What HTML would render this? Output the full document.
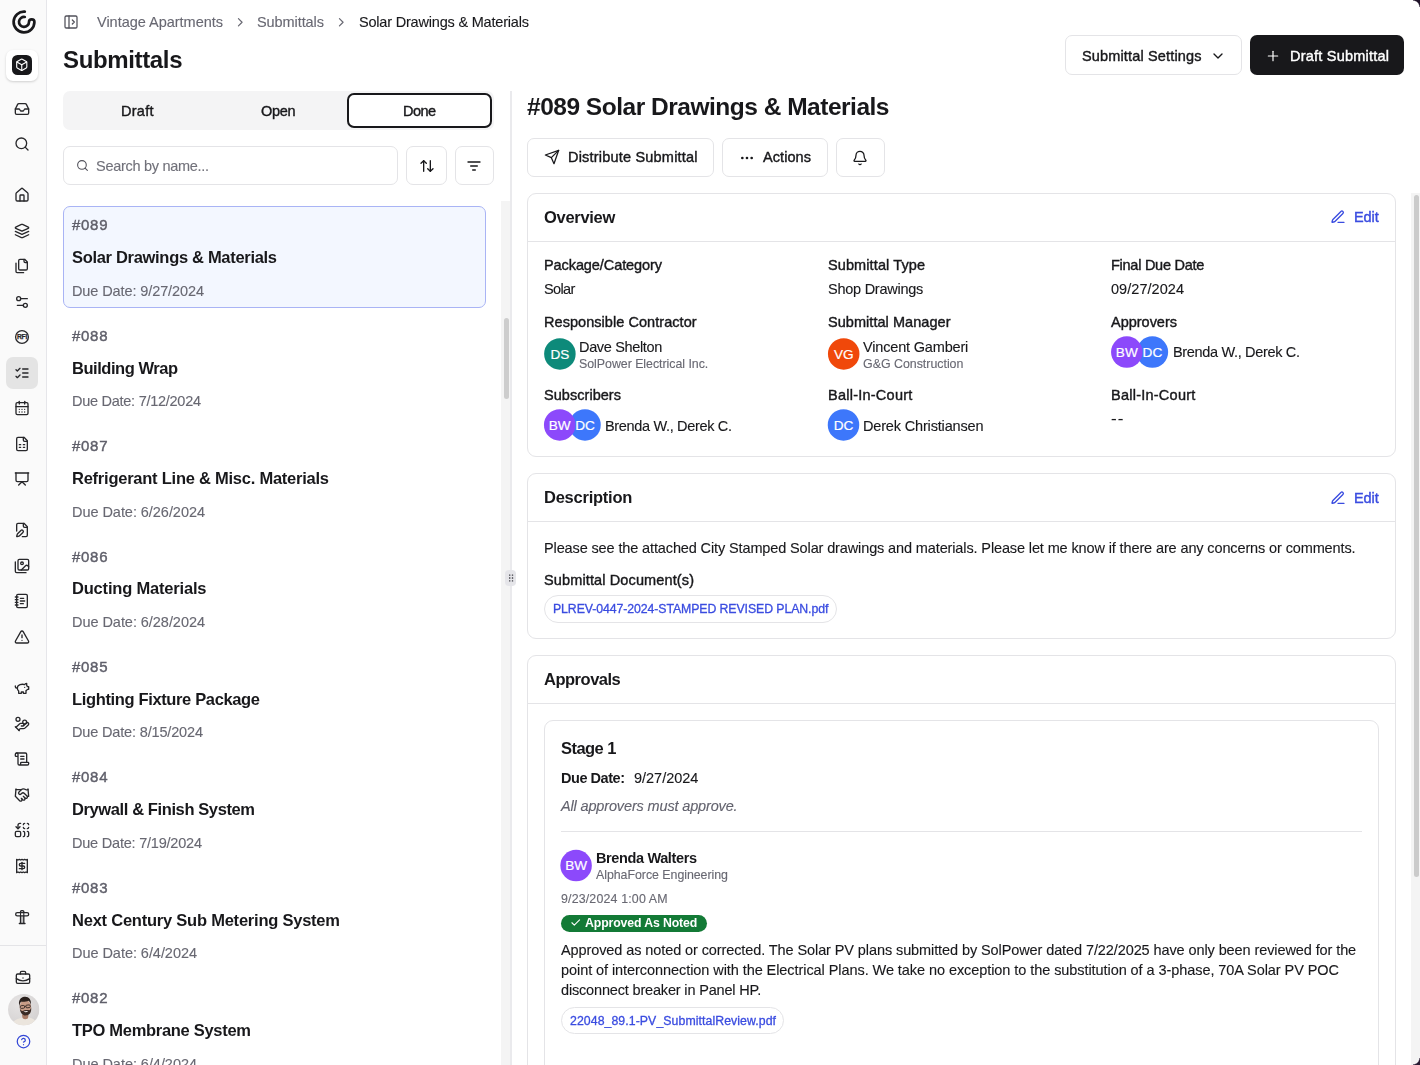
<!DOCTYPE html>
<html lang="en"><head><meta charset="utf-8"><title>Submittals - #089 Solar Drawings &amp; Materials</title>
<style>
*{box-sizing:border-box;margin:0;padding:0}
html,body{width:1420px;height:1065px;overflow:hidden;background:#fff}
body{position:relative;font-family:"Liberation Sans",sans-serif;color:#18181b;-webkit-font-smoothing:antialiased}
aside,header,section,main,article{display:contents}
.b,.t,.ic,.av{position:absolute}
.t{will-change:transform;white-space:nowrap;font-weight:400;display:block}
.ic{overflow:visible}
.av{border-radius:50%;color:#fff;text-align:center;font-family:"Liberation Sans",sans-serif}
</style></head>
<body>
<aside class="sidebar">
<div class="b" style="left:0px;top:0px;width:47px;height:1065px;background:#fafafa;border-right:1px solid #e6e6ea;"></div>
<svg class="ic" style="left:0;top:0;width:47px;height:44px" viewBox="0 0 47 44" fill="none" stroke="#18181b" stroke-width="2.7" stroke-linecap="round"><path d="M24.8 17 A5 5 0 1 0 29 22 A2.7 2.7 0 0 1 34.4 22 A10.4 10.4 0 1 1 24.8 11.6"/></svg>
<div class="b" style="left:6px;top:50px;width:32px;height:31px;background:#fff;border-radius:7px;box-shadow:0 1px 3px rgba(0,0,0,.12),0 1px 2px rgba(0,0,0,.06);"></div>
<div class="b" style="left:12px;top:55px;width:20px;height:20px;background:#18181b;border-radius:5.5px;"></div>
<svg class="ic" style="left:15.25px;top:58.25px;width:13.5px;height:13.5px;color:#fff" viewBox="0 0 24 24" fill="none" stroke="currentColor" stroke-width="2" stroke-linecap="round" stroke-linejoin="round"><path d="M21 8a2 2 0 0 0-1-1.73l-7-4a2 2 0 0 0-2 0l-7 4A2 2 0 0 0 3 8v8a2 2 0 0 0 1 1.73l7 4a2 2 0 0 0 2 0l7-4A2 2 0 0 0 21 16Z"/><path d="m3.3 7 8.7 5 8.7-5"/><path d="M12 22V12"/></svg>
<div class="b" style="left:6px;top:357px;width:32px;height:31.5px;background:#e4e4e4;border-radius:7px;"></div>
<svg class="ic" style="left:14.00px;top:100.50px;width:16px;height:16px;color:#27272a" viewBox="0 0 24 24" fill="none" stroke="currentColor" stroke-width="2" stroke-linecap="round" stroke-linejoin="round"><polyline points="22 12 16 12 14 15 10 15 8 12 2 12"/><path d="M5.45 5.11 2 12v6a2 2 0 0 0 2 2h16a2 2 0 0 0 2-2v-6l-3.45-6.89A2 2 0 0 0 16.76 4H7.24a2 2 0 0 0-1.79 1.11z"/></svg>
<svg class="ic" style="left:14.00px;top:136.00px;width:16px;height:16px;color:#27272a" viewBox="0 0 24 24" fill="none" stroke="currentColor" stroke-width="2" stroke-linecap="round" stroke-linejoin="round"><circle cx="11" cy="11" r="8"/><path d="m21 21-4.3-4.3"/></svg>
<svg class="ic" style="left:14.00px;top:187.00px;width:16px;height:16px;color:#27272a" viewBox="0 0 24 24" fill="none" stroke="currentColor" stroke-width="2" stroke-linecap="round" stroke-linejoin="round"><path d="M15 21v-8a1 1 0 0 0-1-1h-4a1 1 0 0 0-1 1v8"/><path d="M3 10a2 2 0 0 1 .709-1.528l7-5.999a2 2 0 0 1 2.582 0l7 5.999A2 2 0 0 1 21 10v9a2 2 0 0 1-2 2H5a2 2 0 0 1-2-2z"/></svg>
<svg class="ic" style="left:14.00px;top:222.50px;width:16px;height:16px;color:#27272a" viewBox="0 0 24 24" fill="none" stroke="currentColor" stroke-width="2" stroke-linecap="round" stroke-linejoin="round"><path d="m12.83 2.18a2 2 0 0 0-1.66 0L2.6 6.08a1 1 0 0 0 0 1.83l8.58 3.91a2 2 0 0 0 1.66 0l8.58-3.9a1 1 0 0 0 0-1.83Z"/><path d="m22 17.65-9.17 4.16a2 2 0 0 1-1.66 0L2 17.65"/><path d="m22 12.65-9.17 4.16a2 2 0 0 1-1.66 0L2 12.65"/></svg>
<svg class="ic" style="left:14.00px;top:258.00px;width:16px;height:16px;color:#27272a" viewBox="0 0 24 24" fill="none" stroke="currentColor" stroke-width="2" stroke-linecap="round" stroke-linejoin="round"><path d="M20 7h-3a2 2 0 0 1-2-2V2"/><path d="M9 18a2 2 0 0 1-2-2V4a2 2 0 0 1 2-2h7l4 4v10a2 2 0 0 1-2 2Z"/><path d="M3 7.6v12.8A1.6 1.6 0 0 0 4.6 22h9.8"/></svg>
<svg class="ic" style="left:14.00px;top:293.50px;width:16px;height:16px;color:#27272a" viewBox="0 0 24 24" fill="none" stroke="currentColor" stroke-width="2" stroke-linecap="round" stroke-linejoin="round"><path d="M20 7h-9"/><path d="M14 17H5"/><circle cx="17" cy="17" r="3"/><circle cx="7" cy="7" r="3"/></svg>
<svg class="ic" style="left:14.00px;top:364.80px;width:16px;height:16px;color:#27272a" viewBox="0 0 24 24" fill="none" stroke="currentColor" stroke-width="2" stroke-linecap="round" stroke-linejoin="round"><path d="m3 17 2 2 4-4"/><path d="m3 7 2 2 4-4"/><path d="M13 6h8"/><path d="M13 12h8"/><path d="M13 18h8"/></svg>
<svg class="ic" style="left:14.00px;top:400.00px;width:16px;height:16px;color:#27272a" viewBox="0 0 24 24" fill="none" stroke="currentColor" stroke-width="2" stroke-linecap="round" stroke-linejoin="round"><path d="M8 2v4"/><path d="M16 2v4"/><rect width="18" height="18" x="3" y="4" rx="2"/><path d="M3 10h18"/><path d="M8 14h.01"/><path d="M12 14h.01"/><path d="M16 14h.01"/><path d="M8 18h.01"/><path d="M12 18h.01"/><path d="M16 18h.01"/></svg>
<svg class="ic" style="left:14.00px;top:435.50px;width:16px;height:16px;color:#27272a" viewBox="0 0 24 24" fill="none" stroke="currentColor" stroke-width="2" stroke-linecap="round" stroke-linejoin="round"><path d="M15 2H6a2 2 0 0 0-2 2v16a2 2 0 0 0 2 2h12a2 2 0 0 0 2-2V7Z"/><path d="M14 2v4a2 2 0 0 0 2 2h4"/><path d="M8 13h2"/><path d="M14 13h2"/><path d="M8 17h2"/><path d="M14 17h2"/></svg>
<svg class="ic" style="left:14.00px;top:471.00px;width:16px;height:16px;color:#27272a" viewBox="0 0 24 24" fill="none" stroke="currentColor" stroke-width="2" stroke-linecap="round" stroke-linejoin="round"><path d="M2 3h20"/><path d="M21 3v11a2 2 0 0 1-2 2H5a2 2 0 0 1-2-2V3"/><path d="m7 21 5-5 5 5"/></svg>
<svg class="ic" style="left:14.00px;top:522.00px;width:16px;height:16px;color:#27272a" viewBox="0 0 24 24" fill="none" stroke="currentColor" stroke-width="2" stroke-linecap="round" stroke-linejoin="round"><path d="M12.5 22H18a2 2 0 0 0 2-2V7l-5-5H6a2 2 0 0 0-2 2v9.5"/><path d="M14 2v4a2 2 0 0 0 2 2h4"/><path d="M13.378 15.626a1 1 0 1 0-3.004-3.004l-5.01 5.012a2 2 0 0 0-.506.854l-.837 2.87a.5.5 0 0 0 .62.62l2.87-.837a2 2 0 0 0 .854-.506z"/></svg>
<svg class="ic" style="left:14.00px;top:557.50px;width:16px;height:16px;color:#27272a" viewBox="0 0 24 24" fill="none" stroke="currentColor" stroke-width="2" stroke-linecap="round" stroke-linejoin="round"><path d="M18 22H4a2 2 0 0 1-2-2V6"/><path d="m22 13-1.296-1.296a2.41 2.41 0 0 0-3.408 0L11 18"/><circle cx="12" cy="8" r="2"/><rect width="16" height="16" x="6" y="2" rx="2"/></svg>
<svg class="ic" style="left:14.00px;top:593.00px;width:16px;height:16px;color:#27272a" viewBox="0 0 24 24" fill="none" stroke="currentColor" stroke-width="2" stroke-linecap="round" stroke-linejoin="round"><path d="M2 6h4"/><path d="M2 10h4"/><path d="M2 14h4"/><path d="M2 18h4"/><rect width="16" height="20" x="4" y="2" rx="2"/><path d="M9.5 8h5"/><path d="M9.5 12H16"/><path d="M9.5 16H14"/></svg>
<svg class="ic" style="left:14.00px;top:628.50px;width:16px;height:16px;color:#27272a" viewBox="0 0 24 24" fill="none" stroke="currentColor" stroke-width="2" stroke-linecap="round" stroke-linejoin="round"><path d="m21.73 18-8-14a2 2 0 0 0-3.48 0l-8 14A2 2 0 0 0 4 21h16a2 2 0 0 0 1.73-3"/><path d="M12 9v4"/><path d="M12 17h.01"/></svg>
<svg class="ic" style="left:14.00px;top:680.00px;width:16px;height:16px;color:#27272a" viewBox="0 0 24 24" fill="none" stroke="currentColor" stroke-width="2" stroke-linecap="round" stroke-linejoin="round"><path d="M19 5c-1.5 0-2.8 1.4-3 2-3.5-1.5-11-.3-11 5 0 1.8 0 3 2 4.5V20h4v-2h3v2h4v-4c1-.5 1.7-1 2-2h2v-4h-2c0-1-.5-1.5-1-2V5z"/><path d="M2 9v1c0 1.1.9 2 2 2h1"/><path d="M16 11h.01"/></svg>
<svg class="ic" style="left:14.00px;top:715.50px;width:16px;height:16px;color:#27272a" viewBox="0 0 24 24" fill="none" stroke="currentColor" stroke-width="2" stroke-linecap="round" stroke-linejoin="round"><path d="M11 15h2a2 2 0 1 0 0-4h-3c-.6 0-1.1.2-1.4.6L3 17"/><path d="m7 21 1.6-1.4c.3-.4.8-.6 1.4-.6h4c1.1 0 2.1-.4 2.800-1.200l4.600-4.400a2 2 0 0 0-2.750-2.910l-4.200 3.900"/><path d="m2 16 6 6"/><circle cx="16" cy="9" r="2.900"/><circle cx="6" cy="5" r="3"/></svg>
<svg class="ic" style="left:14.00px;top:751.00px;width:16px;height:16px;color:#27272a" viewBox="0 0 24 24" fill="none" stroke="currentColor" stroke-width="2" stroke-linecap="round" stroke-linejoin="round"><path d="M15 12h-5"/><path d="M15 8h-5"/><path d="M19 17V5a2 2 0 0 0-2-2H4"/><path d="M8 21h12a2 2 0 0 0 2-2v-1a1 1 0 0 0-1-1H11a1 1 0 0 0-1 1v1a2 2 0 1 1-4 0V5a2 2 0 1 0-4 0v2a1 1 0 0 0 1 1h3"/></svg>
<svg class="ic" style="left:14.00px;top:786.50px;width:16px;height:16px;color:#27272a" viewBox="0 0 24 24" fill="none" stroke="currentColor" stroke-width="2" stroke-linecap="round" stroke-linejoin="round"><path d="m11 17 2 2a1 1 0 1 0 3-3"/><path d="m14 14 2.500 2.500a1 1 0 1 0 3-3l-3.880-3.880a3 3 0 0 0-4.240 0l-.880.880a1 1 0 1 1-3-3l2.810-2.810a5.790 5.790 0 0 1 7.060-.870l.470.280a2 2 0 0 0 1.420.250L21 4"/><path d="m21 3 1 11h-2"/><path d="M3 3 2 14l6.500 6.500a1 1 0 1 0 3-3"/><path d="M3 4h8"/></svg>
<svg class="ic" style="left:14.00px;top:822.00px;width:16px;height:16px;color:#27272a" viewBox="0 0 24 24" fill="none" stroke="currentColor" stroke-width="2" stroke-linecap="round" stroke-linejoin="round"><path d="M14 14a2 2 0 0 1 2 2v4a2 2 0 0 1-2 2"/><path d="M14 4a2 2 0 0 1 2-2"/><path d="M16 10a2 2 0 0 1-2-2"/><path d="M20 14a2 2 0 0 1 2 2v4a2 2 0 0 1-2 2"/><path d="M20 2a2 2 0 0 1 2 2"/><path d="M22 8a2 2 0 0 1-2 2"/><path d="m3 7 3 3 3-3"/><path d="M6 10V5a3 3 0 0 1 3-3h1"/><rect x="2" y="14" width="8" height="8" rx="2"/></svg>
<svg class="ic" style="left:14.00px;top:857.50px;width:16px;height:16px;color:#27272a" viewBox="0 0 24 24" fill="none" stroke="currentColor" stroke-width="2" stroke-linecap="round" stroke-linejoin="round"><path d="M4 2v20l2-1 2 1 2-1 2 1 2-1 2 1 2-1 2 1V2l-2 1-2-1-2 1-2-1-2 1-2-1-2 1Z"/><path d="M16 8h-6a2 2 0 1 0 0 4h4a2 2 0 1 1 0 4H8"/><path d="M12 17.5v-11"/></svg>
<svg class="ic" style="left:14.3px;top:908.5px;width:16px;height:16px;color:#27272a" viewBox="0 0 24 24" fill="none" stroke="currentColor" stroke-width="2" stroke-linecap="round" stroke-linejoin="round"><path d="M12.250 3.500v18" stroke="#c4c4c4" stroke-width="3" stroke-linecap="butt"/><path d="M9.800 21.500V4a1.500 1.500 0 0 1 1.500-1.500h1.900a1.500 1.500 0 0 1 1.500 1.500v17.500"/><rect x="2.500" y="5.500" width="19.500" height="4.800" rx="2.400" fill="#fafafa"/><path d="M9.800 6v4M14.700 6v4" stroke-width="1.600"/><path d="M8 21.800h8.500"/></svg>
<svg class="ic" style="left:14px;top:329.2px;width:16px;height:16px" viewBox="0 0 16 16" fill="none"><circle cx="8" cy="8" r="6.4" stroke="#27272a" stroke-width="1.3"/><text x="8" y="10.3" text-anchor="middle" font-family="Liberation Sans, sans-serif" font-weight="700" font-size="6.7" fill="#27272a" stroke="#27272a" stroke-width=".25" letter-spacing="-0.25">RFI</text></svg>
<div class="b" style="left:0px;top:945px;width:46px;height:1px;background:#e4e4e7;"></div>
<svg class="ic" style="left:15.20px;top:970.40px;width:16px;height:16px;color:#27272a" viewBox="0 0 24 24" fill="none" stroke="currentColor" stroke-width="2" stroke-linecap="round" stroke-linejoin="round"><path d="M12 12h.01"/><path d="M16 6V4a2 2 0 0 0-2-2h-4a2 2 0 0 0-2 2v2"/><path d="M22 13a18.15 18.15 0 0 1-20 0"/><rect width="20" height="14" x="2" y="6" rx="2"/></svg>
<svg class="ic" style="left:7.9px;top:994px;width:31.4px;height:31.4px" viewBox="0 0 31.400 31.400"><defs><clipPath id="cp"><circle cx="15.700" cy="15.700" r="15.700"/></clipPath><radialGradient id="bgg" cx="35%" cy="30%" r="80%"><stop offset="0" stop-color="#e6e4e4"/><stop offset="1" stop-color="#d3d0d0"/></radialGradient></defs><g clip-path="url(#cp)"><rect width="31.400" height="31.400" fill="url(#bgg)"/><path d="M4 31.400c.5-4 3.500-6 8-7.200l3-1.200 5.500.2c4 1 7.500 2.500 9 8.200z" fill="#ebe5dd"/><path d="M14 20.500l6.500.5-.5 3.200c-1.800 1.600-4 1.500-5.500-.2z" fill="#a87b66"/><g transform="rotate(-6 17.400 13)"><ellipse cx="17.400" cy="13.200" rx="5.700" ry="7.400" fill="#c89c86"/><path d="M11.500 11.800c-.9-5.600 1.800-9 6-9s6.700 3 5.700 8.800c-.4-2.200-1-3.600-2-4.400-1.600.6-5.500.7-7.600.1-1.200 1-1.700 2.300-2.100 4.500z" fill="#2b211d"/><path d="M11.700 13.800c0 5.200 2.400 7.600 5.700 7.600s5.700-2.400 5.700-7.600c-.6 1.700-1.300 2.500-2.300 2.900-1-.9-5.600-.9-6.700 0-1.100-.4-1.800-1.200-2.400-2.900z" fill="#3a2b25"/><path d="M15 17.300q2.400 1.900 4.800 0-2.400-.5-4.800 0z" fill="#f4f0ee"/><rect x="12.300" y="11.300" width="4.300" height="2.700" rx="1" fill="#c89c86" stroke="#241c1a" stroke-width=".8"/><rect x="18" y="11.300" width="4.300" height="2.700" rx="1" fill="#c89c86" stroke="#241c1a" stroke-width=".8"/><path d="M16.600 12.300h1.400" stroke="#241c1a" stroke-width=".7"/></g></g></svg>
<svg class="ic" style="left:16.00px;top:1033.50px;width:15px;height:15px;color:#3347d6" viewBox="0 0 24 24" fill="none" stroke="currentColor" stroke-width="2" stroke-linecap="round" stroke-linejoin="round"><circle cx="12" cy="12" r="10"/><path d="M9.09 9a3 3 0 0 1 5.83 1c0 2-3 3-3 3"/><path d="M12 17h.01"/></svg>
</aside>
<header>
<svg class="ic" style="left:63.00px;top:13.90px;width:16px;height:16px;color:#52525b" viewBox="0 0 24 24" fill="none" stroke="currentColor" stroke-width="1.9" stroke-linecap="round" stroke-linejoin="round"><rect width="18" height="18" x="3" y="3" rx="2"/><path d="M9 3v18"/><path d="m14 9 3 3-3 3"/></svg>
<span class="t" style="left:97px;top:11.50px;font-size:14.5px;line-height:20px;color:#686872;-webkit-text-stroke:0.12px #686872;letter-spacing:-0.017px;">Vintage Apartments</span>
<svg class="ic" style="left:233.05px;top:14.75px;width:14.5px;height:14.5px;color:#686872" viewBox="0 0 24 24" fill="none" stroke="currentColor" stroke-width="2" stroke-linecap="round" stroke-linejoin="round"><path d="m9 18 6-6-6-6"/></svg>
<span class="t" style="left:257px;top:11.50px;font-size:14.5px;line-height:20px;color:#686872;-webkit-text-stroke:0.12px #686872;letter-spacing:-0.078px;">Submittals</span>
<svg class="ic" style="left:333.55px;top:14.75px;width:14.5px;height:14.5px;color:#686872" viewBox="0 0 24 24" fill="none" stroke="currentColor" stroke-width="2" stroke-linecap="round" stroke-linejoin="round"><path d="m9 18 6-6-6-6"/></svg>
<span class="t" style="left:358.5px;top:11.50px;font-size:14.5px;line-height:20px;color:#18181b;-webkit-text-stroke:0.12px #18181b;letter-spacing:-0.195px;">Solar Drawings &amp; Materials</span>
<h1 class="t" style="left:63.3px;top:44.10px;font-size:24px;line-height:32px;color:#18181b;font-weight:700;letter-spacing:-0.354px;">Submittals</h1>
<div class="b btn" style="left:1065px;top:35px;width:177px;height:40px;border:1px solid #e4e4e7;border-radius:7px;background:#fff;"></div>
<span class="t" style="left:1082px;top:45.80px;font-size:14.5px;line-height:20px;color:#18181b;-webkit-text-stroke:0.4px #18181b;letter-spacing:0.154px;">Submittal Settings</span>
<svg class="ic" style="left:1209.50px;top:48.00px;width:16px;height:16px;color:#18181b" viewBox="0 0 24 24" fill="none" stroke="currentColor" stroke-width="2" stroke-linecap="round" stroke-linejoin="round"><path d="m6 9 6 6 6-6"/></svg>
<div class="b btn" style="left:1250px;top:35px;width:154px;height:40px;background:#18181b;border-radius:7px;"></div>
<svg class="ic" style="left:1264.70px;top:47.50px;width:16px;height:16px;color:#fff" viewBox="0 0 24 24" fill="none" stroke="currentColor" stroke-width="1.8" stroke-linecap="round" stroke-linejoin="round"><path d="M5 12h14"/><path d="M12 5v14"/></svg>
<span class="t" style="left:1289.5px;top:45.80px;font-size:14.5px;line-height:20px;color:#fff;-webkit-text-stroke:0.4px #fff;letter-spacing:0.221px;">Draft Submittal</span>
</header>
<section class="listpanel">
<div class="b" style="left:63px;top:91px;width:431px;height:39px;background:#f4f4f5;border-radius:7px;"></div>
<div class="b" style="left:347px;top:93px;width:145px;height:35px;background:#fff;border:2px solid #18181b;border-radius:7px;"></div>
<span class="t" style="left:120.5px;top:101.00px;font-size:14.5px;line-height:20px;color:#18181b;-webkit-text-stroke:0.4px #18181b;letter-spacing:0.270px;">Draft</span>
<span class="t" style="left:261px;top:101.00px;font-size:14.5px;line-height:20px;color:#18181b;-webkit-text-stroke:0.4px #18181b;letter-spacing:-0.328px;">Open</span>
<span class="t" style="left:403px;top:101.00px;font-size:14.5px;line-height:20px;color:#18181b;-webkit-text-stroke:0.4px #18181b;letter-spacing:-0.557px;">Done</span>
<div class="b" style="left:63px;top:146px;width:335px;height:39px;border:1px solid #e4e4e7;border-radius:7px;background:#fff;"></div>
<svg class="ic" style="left:75.70px;top:159.00px;width:13px;height:13px;color:#52525b" viewBox="0 0 24 24" fill="none" stroke="currentColor" stroke-width="2" stroke-linecap="round" stroke-linejoin="round"><circle cx="11" cy="11" r="8"/><path d="m21 21-4.3-4.3"/></svg>
<span class="t" style="left:96px;top:156.00px;font-size:14.5px;line-height:20px;color:#71717a;-webkit-text-stroke:0.12px #71717a;letter-spacing:-0.292px;">Search by name...</span>
<div class="b" style="left:406px;top:146px;width:41px;height:39px;border:1px solid #e4e4e7;border-radius:7px;background:#fff;"></div>
<svg class="ic" style="left:418.70px;top:157.50px;width:16px;height:16px;color:#18181b" viewBox="0 0 24 24" fill="none" stroke="currentColor" stroke-width="2" stroke-linecap="round" stroke-linejoin="round"><path d="m21 16-4 4-4-4"/><path d="M17 20V4"/><path d="m3 8 4-4 4 4"/><path d="M7 4v16"/></svg>
<div class="b" style="left:455px;top:146px;width:39px;height:39px;border:1px solid #e4e4e7;border-radius:7px;background:#fff;"></div>
<svg class="ic" style="left:466.40px;top:157.50px;width:16px;height:16px;color:#18181b" viewBox="0 0 24 24" fill="none" stroke="currentColor" stroke-width="2" stroke-linecap="round" stroke-linejoin="round"><path d="M3 6h18"/><path d="M7 12h10"/><path d="M10 18h4"/></svg>
<div class="b" style="left:63px;top:206px;width:423px;height:102px;background:#f3f7ff;border:1px solid #a9b4f5;border-radius:7px;"></div>
<article>
<span class="t" style="left:72px;top:215.30px;font-size:15px;line-height:20px;color:#5f5f6a;-webkit-text-stroke:0.42px #5f5f6a;letter-spacing:0.708px;">#089</span>
<h3 class="t" style="left:72px;top:245.20px;font-size:16.5px;line-height:24px;color:#18181b;font-weight:700;letter-spacing:-0.310px;">Solar Drawings &amp; Materials</h3>
<span class="t" style="left:72px;top:280.80px;font-size:14.5px;line-height:20px;color:#686872;-webkit-text-stroke:0.12px #686872;letter-spacing:-0.102px;">Due Date: 9/27/2024</span>
</article>
<article>
<span class="t" style="left:72px;top:325.70px;font-size:15px;line-height:20px;color:#5f5f6a;-webkit-text-stroke:0.42px #5f5f6a;letter-spacing:0.708px;">#088</span>
<h3 class="t" style="left:72px;top:355.60px;font-size:16.5px;line-height:24px;color:#18181b;font-weight:700;letter-spacing:-0.461px;">Building Wrap</h3>
<span class="t" style="left:72px;top:391.20px;font-size:14.5px;line-height:20px;color:#686872;-webkit-text-stroke:0.12px #686872;letter-spacing:-0.268px;">Due Date: 7/12/2024</span>
</article>
<article>
<span class="t" style="left:72px;top:436.10px;font-size:15px;line-height:20px;color:#5f5f6a;-webkit-text-stroke:0.42px #5f5f6a;letter-spacing:0.708px;">#087</span>
<h3 class="t" style="left:72px;top:466.00px;font-size:16.5px;line-height:24px;color:#18181b;font-weight:700;letter-spacing:-0.242px;">Refrigerant Line &amp; Misc. Materials</h3>
<span class="t" style="left:72px;top:501.60px;font-size:14.5px;line-height:20px;color:#686872;-webkit-text-stroke:0.12px #686872;letter-spacing:-0.046px;">Due Date: 6/26/2024</span>
</article>
<article>
<span class="t" style="left:72px;top:546.50px;font-size:15px;line-height:20px;color:#5f5f6a;-webkit-text-stroke:0.42px #5f5f6a;letter-spacing:0.708px;">#086</span>
<h3 class="t" style="left:72px;top:576.40px;font-size:16.5px;line-height:24px;color:#18181b;font-weight:700;letter-spacing:-0.189px;">Ducting Materials</h3>
<span class="t" style="left:72px;top:612.00px;font-size:14.5px;line-height:20px;color:#686872;-webkit-text-stroke:0.12px #686872;letter-spacing:-0.046px;">Due Date: 6/28/2024</span>
</article>
<article>
<span class="t" style="left:72px;top:656.90px;font-size:15px;line-height:20px;color:#5f5f6a;-webkit-text-stroke:0.42px #5f5f6a;letter-spacing:0.708px;">#085</span>
<h3 class="t" style="left:72px;top:686.80px;font-size:16.5px;line-height:24px;color:#18181b;font-weight:700;letter-spacing:-0.357px;">Lighting Fixture Package</h3>
<span class="t" style="left:72px;top:722.40px;font-size:14.5px;line-height:20px;color:#686872;-webkit-text-stroke:0.12px #686872;letter-spacing:-0.157px;">Due Date: 8/15/2024</span>
</article>
<article>
<span class="t" style="left:72px;top:767.30px;font-size:15px;line-height:20px;color:#5f5f6a;-webkit-text-stroke:0.42px #5f5f6a;letter-spacing:0.708px;">#084</span>
<h3 class="t" style="left:72px;top:797.20px;font-size:16.5px;line-height:24px;color:#18181b;font-weight:700;letter-spacing:-0.393px;">Drywall &amp; Finish System</h3>
<span class="t" style="left:72px;top:832.80px;font-size:14.5px;line-height:20px;color:#686872;-webkit-text-stroke:0.12px #686872;letter-spacing:-0.213px;">Due Date: 7/19/2024</span>
</article>
<article>
<span class="t" style="left:72px;top:877.70px;font-size:15px;line-height:20px;color:#5f5f6a;-webkit-text-stroke:0.42px #5f5f6a;letter-spacing:0.708px;">#083</span>
<h3 class="t" style="left:72px;top:907.60px;font-size:16.5px;line-height:24px;color:#18181b;font-weight:700;letter-spacing:-0.228px;">Next Century Sub Metering System</h3>
<span class="t" style="left:72px;top:943.20px;font-size:14.5px;line-height:20px;color:#686872;-webkit-text-stroke:0.12px #686872;letter-spacing:-0.045px;">Due Date: 6/4/2024</span>
</article>
<article>
<span class="t" style="left:72px;top:988.10px;font-size:15px;line-height:20px;color:#5f5f6a;-webkit-text-stroke:0.42px #5f5f6a;letter-spacing:0.708px;">#082</span>
<h3 class="t" style="left:72px;top:1018.00px;font-size:16.5px;line-height:24px;color:#18181b;font-weight:700;letter-spacing:-0.295px;">TPO Membrane System</h3>
<span class="t" style="left:72px;top:1053.60px;font-size:14.5px;line-height:20px;color:#686872;-webkit-text-stroke:0.12px #686872;letter-spacing:-0.045px;">Due Date: 6/4/2024</span>
</article>
<div class="b" style="left:501px;top:201px;width:9px;height:864px;background:#f4f4f4;"></div>
<div class="b" style="left:504px;top:318px;width:4.5px;height:81px;background:#cdcdcd;border-radius:3px;"></div>
<div class="b" style="left:510px;top:91px;width:2px;height:974px;background:#eaeaed;"></div>
<div class="b" style="left:505.4px;top:570px;width:11px;height:16px;background:#e5e5e9;border-radius:4px;"></div>
<svg class="ic" style="left:505px;top:570px;width:12px;height:16px" viewBox="0 0 12 16" fill="#3f3f46"><rect x="4" y="4.400" width="1.400" height="1.400" rx=".3"/><rect x="6.800" y="4.400" width="1.400" height="1.400" rx=".3"/><rect x="4" y="7.300" width="1.400" height="1.400" rx=".3"/><rect x="6.800" y="7.300" width="1.400" height="1.400" rx=".3"/><rect x="4" y="10.200" width="1.400" height="1.400" rx=".3"/><rect x="6.800" y="10.200" width="1.400" height="1.400" rx=".3"/></svg>
</section>
<main>
<h2 class="t" style="left:527.3px;top:91.30px;font-size:24.5px;line-height:32px;color:#18181b;font-weight:700;letter-spacing:-0.490px;">#089 Solar Drawings &amp; Materials</h2>
<div class="b btn" style="left:527px;top:138px;width:187px;height:39px;border:1px solid #e4e4e7;border-radius:7px;background:#fff;"></div>
<svg class="ic" style="left:543.80px;top:149.30px;width:16px;height:16px;color:#18181b" viewBox="0 0 24 24" fill="none" stroke="currentColor" stroke-width="1.9" stroke-linecap="round" stroke-linejoin="round"><path d="m22 2-7 20-4-9-9-4Z"/><path d="M22 2 11 13"/></svg>
<span class="t" style="left:568px;top:147.20px;font-size:14.5px;line-height:20px;color:#18181b;-webkit-text-stroke:0.4px #18181b;letter-spacing:0.199px;">Distribute Submittal</span>
<div class="b btn" style="left:722px;top:138px;width:106px;height:39px;border:1px solid #e4e4e7;border-radius:7px;background:#fff;"></div>
<svg class="ic" style="left:738.70px;top:149.50px;width:16px;height:16px;color:#18181b" viewBox="0 0 24 24" fill="none" stroke="currentColor" stroke-width="2" stroke-linecap="round" stroke-linejoin="round"><circle cx="12" cy="12" r="1"/><circle cx="19" cy="12" r="1"/><circle cx="5" cy="12" r="1"/></svg>
<span class="t" style="left:763px;top:147.20px;font-size:14.5px;line-height:20px;color:#18181b;-webkit-text-stroke:0.4px #18181b;letter-spacing:0.073px;">Actions</span>
<div class="b btn" style="left:836px;top:138px;width:49px;height:39px;border:1px solid #e4e4e7;border-radius:7px;background:#fff;"></div>
<svg class="ic" style="left:852.30px;top:149.50px;width:16px;height:16px;color:#18181b" viewBox="0 0 24 24" fill="none" stroke="currentColor" stroke-width="1.9" stroke-linecap="round" stroke-linejoin="round"><path d="M10.268 21a2 2 0 0 0 3.464 0"/><path d="M3.262 15.326A1 1 0 0 0 4 17h16a1 1 0 0 0 .74-1.673C19.41 13.956 18 12.499 18 8A6 6 0 0 0 6 8c0 4.499-1.411 5.956-2.738 7.326"/></svg>
<div class="b card" style="left:527px;top:193px;width:869px;height:264px;border:1px solid #e4e4e7;border-radius:9px;background:#fff;"></div>
<div class="b" style="left:528px;top:241px;width:867px;height:1px;background:#e4e4e7;"></div>
<h3 class="t" style="left:544.3px;top:204.90px;font-size:16.5px;line-height:24px;color:#18181b;font-weight:700;letter-spacing:-0.299px;">Overview</h3>
<svg class="ic" style="left:1330.00px;top:209.20px;width:16px;height:16px;color:#3a4ce0" viewBox="0 0 24 24" fill="none" stroke="currentColor" stroke-width="2" stroke-linecap="round" stroke-linejoin="round"><path d="M12 20h9"/><path d="M16.376 3.622a1 1 0 0 1 3.002 3.002L7.368 18.635a2 2 0 0 1-.855.506l-2.872.838a.5.5 0 0 1-.62-.62l.838-2.872a2 2 0 0 1 .506-.854z"/></svg>
<span class="t" style="left:1354.2px;top:207.00px;font-size:14.5px;line-height:20px;color:#3a4ce0;-webkit-text-stroke:0.4px #3a4ce0;letter-spacing:-0.100px;">Edit</span>
<span class="t" style="left:544.3px;top:254.80px;font-size:14.5px;line-height:20px;color:#18181b;-webkit-text-stroke:0.4px #18181b;letter-spacing:-0.086px;">Package/Category</span>
<span class="t" style="left:544.3px;top:279.00px;font-size:14.5px;line-height:20px;color:#18181b;-webkit-text-stroke:0.12px #18181b;letter-spacing:-0.615px;">Solar</span>
<span class="t" style="left:827.5px;top:254.80px;font-size:14.5px;line-height:20px;color:#18181b;-webkit-text-stroke:0.4px #18181b;letter-spacing:0.103px;">Submittal Type</span>
<span class="t" style="left:827.5px;top:279.00px;font-size:14.5px;line-height:20px;color:#18181b;-webkit-text-stroke:0.12px #18181b;letter-spacing:-0.252px;">Shop Drawings</span>
<span class="t" style="left:1111.0px;top:254.80px;font-size:14.5px;line-height:20px;color:#18181b;-webkit-text-stroke:0.4px #18181b;letter-spacing:-0.263px;">Final Due Date</span>
<span class="t" style="left:1111.0px;top:279.00px;font-size:14.5px;line-height:20px;color:#18181b;-webkit-text-stroke:0.12px #18181b;letter-spacing:0.047px;">09/27/2024</span>
<span class="t" style="left:544.3px;top:311.50px;font-size:14.5px;line-height:20px;color:#18181b;-webkit-text-stroke:0.4px #18181b;letter-spacing:0.051px;">Responsible Contractor</span>
<span class="t" style="left:827.5px;top:311.50px;font-size:14.5px;line-height:20px;color:#18181b;-webkit-text-stroke:0.4px #18181b;letter-spacing:0.050px;">Submittal Manager</span>
<span class="t" style="left:1111.0px;top:311.50px;font-size:14.5px;line-height:20px;color:#18181b;-webkit-text-stroke:0.4px #18181b;letter-spacing:-0.012px;">Approvers</span>
<svg class="ic" style="left:543px;top:337px;width:35px;height:35px" viewBox="0 0 35 35"><circle cx="16.90" cy="16.90" r="15.75" fill="#0d8a7a"/><text x="16.90" y="21.73" text-anchor="middle" font-family="Liberation Sans, sans-serif" font-size="13.6" fill="#fff" stroke="#fff" stroke-width=".2">DS</text></svg>
<span class="t" style="left:579.1px;top:336.50px;font-size:14.5px;line-height:20px;color:#18181b;-webkit-text-stroke:0.12px #18181b;letter-spacing:-0.342px;">Dave Shelton</span>
<span class="t" style="left:579.1px;top:356.00px;font-size:12.4px;line-height:16px;color:#686872;-webkit-text-stroke:0.12px #686872;letter-spacing:-0.037px;">SolPower Electrical Inc.</span>
<svg class="ic" style="left:826px;top:337px;width:35px;height:35px" viewBox="0 0 35 35"><circle cx="17.70" cy="16.90" r="15.75" fill="#f0480a"/><text x="17.70" y="21.73" text-anchor="middle" font-family="Liberation Sans, sans-serif" font-size="13.6" fill="#fff" stroke="#fff" stroke-width=".2">VG</text></svg>
<span class="t" style="left:863px;top:336.50px;font-size:14.5px;line-height:20px;color:#18181b;-webkit-text-stroke:0.12px #18181b;letter-spacing:-0.174px;">Vincent Gamberi</span>
<span class="t" style="left:863px;top:356.00px;font-size:12.4px;line-height:16px;color:#686872;-webkit-text-stroke:0.12px #686872;letter-spacing:-0.010px;">G&amp;G Construction</span>
<svg class="ic" style="left:1135px;top:335px;width:35px;height:35px" viewBox="0 0 35 35"><circle cx="17.40" cy="17.10" r="15.75" fill="#3d77fb"/><text x="17.40" y="21.93" text-anchor="middle" font-family="Liberation Sans, sans-serif" font-size="13.6" fill="#fff" stroke="#fff" stroke-width=".2">DC</text></svg>
<svg class="ic" style="left:1110px;top:335px;width:35px;height:35px" viewBox="0 0 35 35"><circle cx="16.80" cy="17.10" r="15.75" fill="#8c49fb"/><text x="16.80" y="21.93" text-anchor="middle" font-family="Liberation Sans, sans-serif" font-size="13.6" fill="#fff" stroke="#fff" stroke-width=".2">BW</text></svg>
<span class="t" style="left:1172.5px;top:341.90px;font-size:14.5px;line-height:20px;color:#18181b;-webkit-text-stroke:0.12px #18181b;letter-spacing:-0.332px;">Brenda W., Derek C.</span>
<span class="t" style="left:544.3px;top:384.70px;font-size:14.5px;line-height:20px;color:#18181b;-webkit-text-stroke:0.4px #18181b;letter-spacing:0.044px;">Subscribers</span>
<span class="t" style="left:827.5px;top:384.70px;font-size:14.5px;line-height:20px;color:#18181b;-webkit-text-stroke:0.4px #18181b;letter-spacing:0.242px;">Ball-In-Court</span>
<span class="t" style="left:1111.0px;top:384.70px;font-size:14.5px;line-height:20px;color:#18181b;-webkit-text-stroke:0.4px #18181b;letter-spacing:0.242px;">Ball-In-Court</span>
<svg class="ic" style="left:568px;top:408px;width:35px;height:35px" viewBox="0 0 35 35"><circle cx="17.00" cy="16.90" r="15.75" fill="#3d77fb"/><text x="17.00" y="21.73" text-anchor="middle" font-family="Liberation Sans, sans-serif" font-size="13.6" fill="#fff" stroke="#fff" stroke-width=".2">DC</text></svg>
<svg class="ic" style="left:542px;top:408px;width:35px;height:35px" viewBox="0 0 35 35"><circle cx="17.70" cy="16.90" r="15.75" fill="#8c49fb"/><text x="17.70" y="21.73" text-anchor="middle" font-family="Liberation Sans, sans-serif" font-size="13.6" fill="#fff" stroke="#fff" stroke-width=".2">BW</text></svg>
<span class="t" style="left:605.2px;top:415.70px;font-size:14.5px;line-height:20px;color:#18181b;-webkit-text-stroke:0.12px #18181b;letter-spacing:-0.332px;">Brenda W., Derek C.</span>
<svg class="ic" style="left:826px;top:408px;width:35px;height:35px" viewBox="0 0 35 35"><circle cx="17.50" cy="16.90" r="15.75" fill="#3d77fb"/><text x="17.50" y="21.73" text-anchor="middle" font-family="Liberation Sans, sans-serif" font-size="13.6" fill="#fff" stroke="#fff" stroke-width=".2">DC</text></svg>
<span class="t" style="left:863.4px;top:415.70px;font-size:14.5px;line-height:20px;color:#18181b;-webkit-text-stroke:0.12px #18181b;letter-spacing:-0.165px;">Derek Christiansen</span>
<span class="t" style="left:1111.0px;top:409.40px;font-size:17px;line-height:20px;color:#18181b;-webkit-text-stroke:0.12px #18181b;letter-spacing:1.172px;">--</span>
<div class="b card" style="left:527px;top:473px;width:869px;height:166px;border:1px solid #e4e4e7;border-radius:9px;background:#fff;"></div>
<div class="b" style="left:528px;top:521px;width:867px;height:1px;background:#e4e4e7;"></div>
<h3 class="t" style="left:544.3px;top:484.90px;font-size:16.5px;line-height:24px;color:#18181b;font-weight:700;letter-spacing:-0.248px;">Description</h3>
<svg class="ic" style="left:1330.00px;top:490.00px;width:16px;height:16px;color:#3a4ce0" viewBox="0 0 24 24" fill="none" stroke="currentColor" stroke-width="2" stroke-linecap="round" stroke-linejoin="round"><path d="M12 20h9"/><path d="M16.376 3.622a1 1 0 0 1 3.002 3.002L7.368 18.635a2 2 0 0 1-.855.506l-2.872.838a.5.5 0 0 1-.62-.62l.838-2.872a2 2 0 0 1 .506-.854z"/></svg>
<span class="t" style="left:1354.2px;top:487.90px;font-size:14.5px;line-height:20px;color:#3a4ce0;-webkit-text-stroke:0.4px #3a4ce0;letter-spacing:-0.100px;">Edit</span>
<p class="t" style="left:544.3px;top:537.80px;font-size:14.5px;line-height:20px;color:#18181b;-webkit-text-stroke:0.12px #18181b;letter-spacing:-0.125px;">Please see the attached City Stamped Solar drawings and materials. Please let me know if there are any concerns or comments.</p>
<span class="t" style="left:544.3px;top:570.20px;font-size:14.5px;line-height:20px;color:#18181b;-webkit-text-stroke:0.4px #18181b;letter-spacing:0.127px;">Submittal Document(s)</span>
<div class="b" style="left:544px;top:595px;width:293px;height:28px;border:1px solid #e4e4e7;border-radius:14px;background:#fff;"></div>
<span class="t" style="left:552.7px;top:600.60px;font-size:12.3px;line-height:16px;color:#3a4ce0;-webkit-text-stroke:0.3px #3a4ce0;letter-spacing:-0.085px;">PLREV-0447-2024-STAMPED REVISED PLAN.pdf</span>
<div class="b card" style="left:527px;top:655px;width:869px;height:430px;border:1px solid #e4e4e7;border-radius:9px;background:#fff;"></div>
<div class="b" style="left:528px;top:703px;width:867px;height:1px;background:#e4e4e7;"></div>
<h3 class="t" style="left:544.3px;top:666.90px;font-size:16.5px;line-height:24px;color:#18181b;font-weight:700;letter-spacing:-0.486px;">Approvals</h3>
<div class="b" style="left:544px;top:720px;width:835px;height:360px;border:1px solid #e4e4e7;border-radius:9px;background:#fff;"></div>
<h4 class="t" style="left:560.8px;top:736.20px;font-size:16.5px;line-height:24px;color:#18181b;font-weight:700;letter-spacing:-0.534px;">Stage 1</h4>
<span class="t" style="left:560.8px;top:768.20px;font-size:14.5px;line-height:20px;color:#18181b;font-weight:700;letter-spacing:-0.461px;">Due Date:</span>
<span class="t" style="left:634.2px;top:768.20px;font-size:14.5px;line-height:20px;color:#18181b;-webkit-text-stroke:0.12px #18181b;letter-spacing:-0.014px;">9/27/2024</span>
<span class="t" style="left:560.8px;top:795.70px;font-size:14.5px;line-height:20px;color:#63636e;font-style:italic;-webkit-text-stroke:0.12px #63636e;letter-spacing:-0.151px;">All approvers must approve.</span>
<div class="b" style="left:561px;top:831px;width:801px;height:1px;background:#e4e4e7;"></div>
<svg class="ic" style="left:559px;top:848px;width:35px;height:35px" viewBox="0 0 35 35"><circle cx="17.10" cy="17.60" r="15.75" fill="#8c49fb"/><text x="17.10" y="22.43" text-anchor="middle" font-family="Liberation Sans, sans-serif" font-size="13.6" fill="#fff" stroke="#fff" stroke-width=".2">BW</text></svg>
<span class="t" style="left:596.1px;top:847.70px;font-size:14.5px;line-height:20px;color:#18181b;font-weight:700;letter-spacing:-0.371px;">Brenda Walters</span>
<span class="t" style="left:596.1px;top:867.30px;font-size:12.4px;line-height:16px;color:#686872;-webkit-text-stroke:0.12px #686872;letter-spacing:-0.045px;">AlphaForce Engineering</span>
<span class="t" style="left:560.8px;top:890.80px;font-size:12.4px;line-height:16px;color:#686872;-webkit-text-stroke:0.12px #686872;letter-spacing:0.161px;">9/23/2024 1:00 AM</span>
<div class="b" style="left:561px;top:915px;width:146px;height:16.5px;background:#137a36;border-radius:8.5px;"></div>
<svg class="ic" style="left:569.55px;top:917.45px;width:11.5px;height:11.5px;color:#fff" viewBox="0 0 24 24" fill="none" stroke="currentColor" stroke-width="2.3" stroke-linecap="round" stroke-linejoin="round"><path d="M20 6 9 17l-5-5"/></svg>
<span class="t" style="left:585.2px;top:915.30px;font-size:12.3px;line-height:16px;color:#fff;font-weight:700;letter-spacing:-0.133px;">Approved As Noted</span>
<p class="t" style="left:560.8px;top:940.30px;font-size:14.5px;line-height:20px;color:#18181b;-webkit-text-stroke:0.12px #18181b;letter-spacing:-0.096px;">Approved as noted or corrected. The Solar PV plans submitted by SolPower dated 7/22/2025 have only been reviewed for the</p>
<p class="t" style="left:560.8px;top:960.00px;font-size:14.5px;line-height:20px;color:#18181b;-webkit-text-stroke:0.12px #18181b;letter-spacing:-0.069px;">point of interconnection with the Electrical Plans. We take no exception to the substitution of a 3-phase, 70A Solar PV POC</p>
<p class="t" style="left:560.8px;top:979.70px;font-size:14.5px;line-height:20px;color:#18181b;-webkit-text-stroke:0.12px #18181b;letter-spacing:-0.169px;">disconnect breaker in Panel HP.</p>
<div class="b" style="left:561px;top:1007px;width:223px;height:27px;border:1px solid #e4e4e7;border-radius:14px;background:#fff;"></div>
<span class="t" style="left:569.7px;top:1012.90px;font-size:12.3px;line-height:16px;color:#3a4ce0;-webkit-text-stroke:0.3px #3a4ce0;letter-spacing:0.071px;">22048_89.1-PV_SubmittalReview.pdf</span>
<div class="b" style="left:1411px;top:193px;width:9px;height:872px;background:#f4f4f4;"></div>
<div class="b" style="left:1414px;top:195px;width:4.5px;height:682px;background:#cbcbcb;border-radius:3px;"></div>
</main>
<div class="b" style="left:1413px;top:0;width:7px;height:7px;background:radial-gradient(circle at 0 7px, rgba(31,18,40,0) 5.800px, #1f1228 7px);"></div>
<div class="b" style="left:1413px;top:1058px;width:7px;height:7px;background:radial-gradient(circle at 0 0, rgba(42,27,51,0) 5.800px, #2a1b33 7px);"></div>
</body></html>
